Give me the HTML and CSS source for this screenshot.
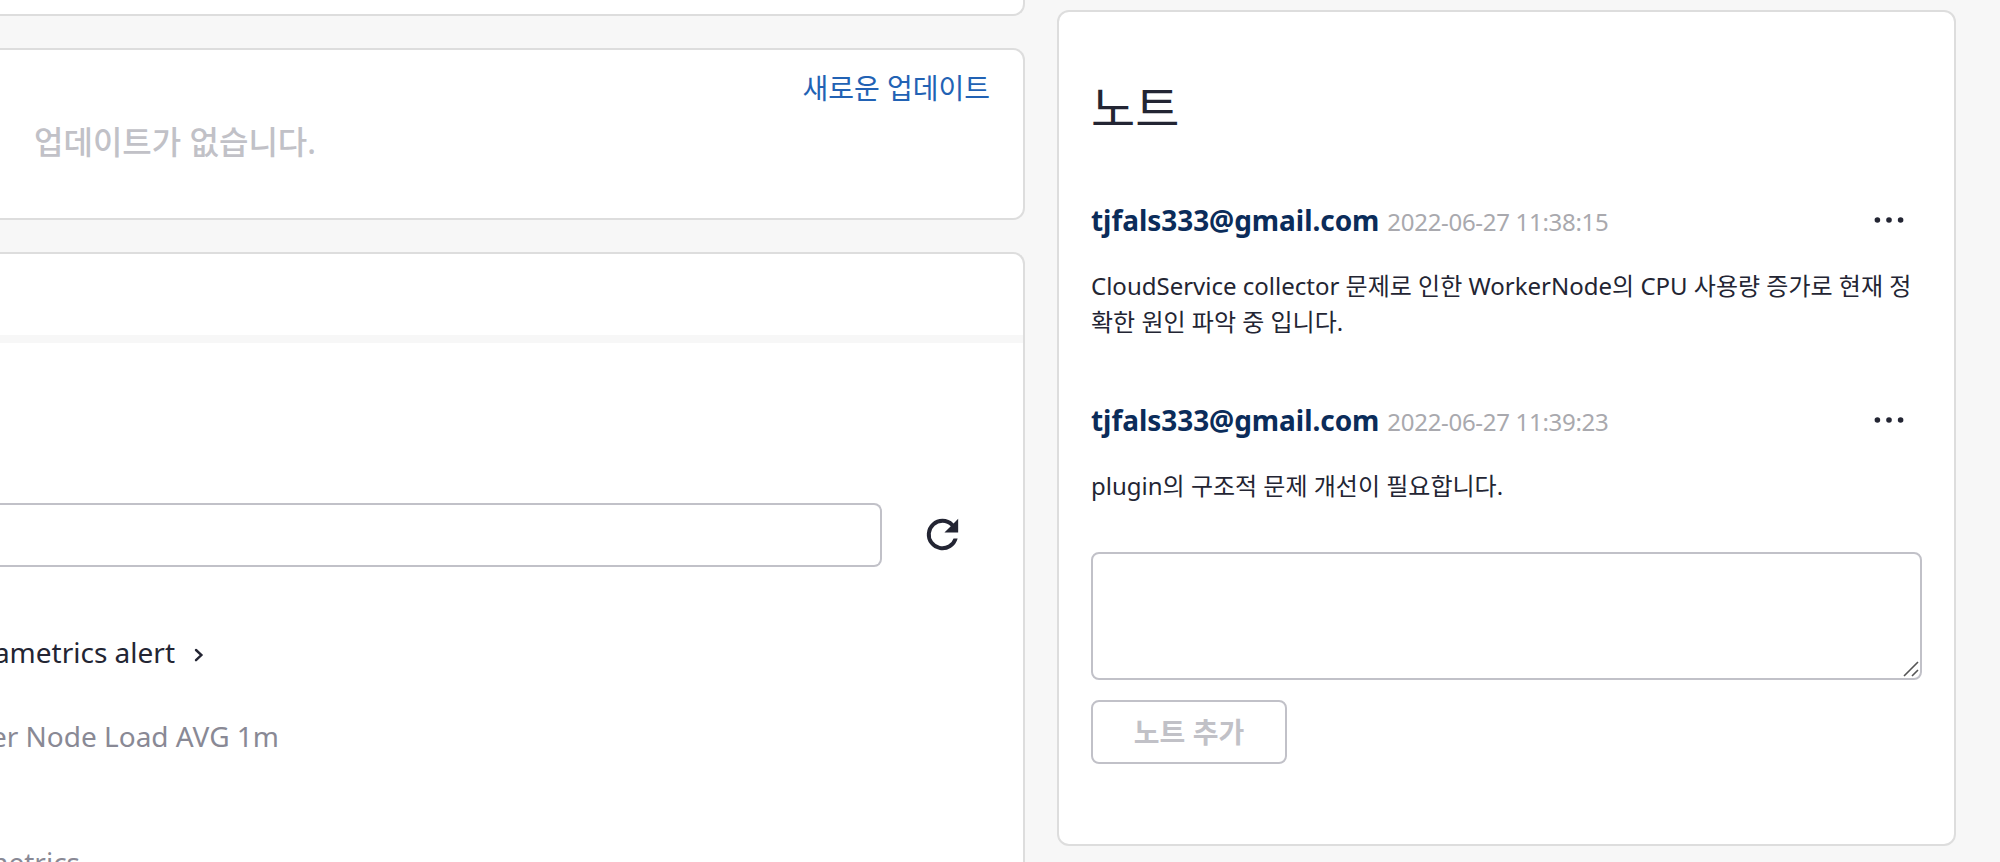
FILE: index.html
```html
<!DOCTYPE html>
<html lang="ko">
<head>
<meta charset="utf-8">
<title>노트</title>
<link rel="stylesheet" href="styles.css">
</head>
<body>
<div class="page">
  <main class="main">
    <section class="card card-stub"></section>
    <section class="card card-update">
      <a class="new-update">새로운 업데이트</a>
      <p class="empty">업데이트가 없습니다.</p>
    </section>
    <section class="card card-alerts">
      <div class="tabs"></div>
      <div class="toolbar">
        <div class="search"></div>
        <svg class="refresh" viewBox="0 0 24 24"><path d="M17.65 6.35A7.96 7.96 0 0 0 12 4a8 8 0 1 0 7.73 10h-2.08A6 6 0 1 1 12 6c1.66 0 3.14.69 4.22 1.78L13 11h7V4z"/></svg>
      </div>
      <div class="alert-title">
        <span class="clip clip-title">ametrics alert</span>
        <svg class="chevron" viewBox="0 0 12 16"><path d="M3 3l5.4 5L3 13.2"/></svg>
      </div>
      <div class="clip clip-node">er Node Load AVG 1m</div>
      <div class="clip clip-source">ametrics</div>
    </section>
  </main>
  <aside class="card notes">
    <h2 class="notes-title">노트</h2>
    <article class="note">
      <header class="note-head">
        <strong class="author">tjfals333@gmail.com</strong>
        <time class="date">2022-06-27 11:38:15</time>
        <svg class="more" viewBox="0 0 32 8"><circle cx="4.4" cy="4" r="2.8"/><circle cx="16" cy="4" r="2.8"/><circle cx="27.6" cy="4" r="2.8"/></svg>
      </header>
      <p class="note-body">CloudService collector 문제로 인한 WorkerNode의 CPU 사용량 증가로 현재 정확한 원인 파악 중 입니다.</p>
    </article>
    <article class="note">
      <header class="note-head">
        <strong class="author">tjfals333@gmail.com</strong>
        <time class="date">2022-06-27 11:39:23</time>
        <svg class="more" viewBox="0 0 32 8"><circle cx="4.4" cy="4" r="2.8"/><circle cx="16" cy="4" r="2.8"/><circle cx="27.6" cy="4" r="2.8"/></svg>
      </header>
      <p class="note-body">plugin의 구조적 문제 개선이 필요합니다.</p>
    </article>
    <div class="field">
      <textarea class="textarea"></textarea>
      <svg class="grip" viewBox="0 0 16 16"><path d="M1 15L15 1M9 15l6-6"/></svg>
    </div>
    <button class="add" disabled>노트 추가</button>
  </aside>
</div>
</body>
</html>
```

FILE: styles.css
```css
* { box-sizing: border-box; }
body {
  margin: 0;
  background: #f7f7f7;
  color: #232533;
  font-family: "Noto Sans", "Noto Sans CJK KR", sans-serif;
  font-size: 28px;
}
p, h2 { margin: 0; }
.page {
  display: flex;
  align-items: flex-start;
  gap: 32px;
  width: 2000px;
  height: 862px;
  overflow: hidden;
}
.main {
  display: flex;
  flex-direction: column;
  gap: 32px;
  width: 1025px;
  height: 862px;
  flex: none;
}
.card {
  background: #fff;
  border: 2px solid #ddd;
  border-radius: 12px;
  flex: none;
}
.main .card { border-left: 0; border-top-left-radius: 0; border-bottom-left-radius: 0; }
.main .card-stub { height: 16px; border-top: 0; border-top-right-radius: 0; }
.card-update { height: 172px; padding: 18px 33px 0 34px; }
.new-update {
  display: block;
  text-align: right;
  line-height: 40px;
  color: #2262b4;
}
.empty {
  margin-top: 10px;
  line-height: 48px;
  font-size: 32px;
  font-weight: 500;
  color: #c1c1c7;
}
.main .card-alerts { height: 640px; border-bottom: 0; border-bottom-right-radius: 0; }
.tabs { height: 89px; border-bottom: 8px solid #f7f7f7; }
.toolbar {
  display: flex;
  align-items: center;
  gap: 37px;
  margin-top: 160px;
}
.search {
  width: 882px;
  height: 64px;
  border: 2px solid #c1c1c8;
  border-left: 0;
  border-radius: 0 8px 8px 0;
}
.refresh { width: 47px; height: 47px; margin-bottom: 1px; fill: #232533; }
.alert-title { display: flex; align-items: center; gap: 18px; margin-top: 65px; }
.clip {
  display: flex;
  justify-content: flex-end;
  overflow: hidden;
  line-height: 40px;
  white-space: nowrap;
}
.clip-title { width: 175px; }
.clip-node { width: 279px; margin-top: 44px; color: #898995; }
.clip-source { width: 80px; margin-top: 86px; color: #898995; }
.chevron {
  width: 12px;
  height: 16px;
  margin-top: 6px;
  fill: none;
  stroke: #232533;
  stroke-width: 2.4;
  stroke-linecap: round;
}
.notes {
  width: 899px;
  height: 836px;
  margin-top: 10px;
  padding: 60px 32px 0;
}
.notes-title { font-size: 48px; font-weight: 400; line-height: 72px; }
.note { height: 200px; }
.notes-title + .note { margin-top: 56px; }
.note-head { display: flex; align-items: baseline; line-height: 40px; }
.author { color: #0b2c5a; font-weight: 700; letter-spacing: -0.05px; }
.date { margin-left: 8px; font-size: 24px; letter-spacing: -0.3px; color: #a9a9ae; }
.more { align-self: center; width: 32px; height: 8px; margin: 0 17px 2px auto; fill: #232533; }
.note-body { margin-top: 26px; font-size: 24px; line-height: 36px; }
.field { position: relative; height: 128px; margin-top: -48px; }
.textarea {
  display: block;
  width: 831px;
  height: 128px;
  padding: 8px 16px;
  border: 2px solid #c1c1c8;
  border-radius: 8px;
  resize: none;
  font: inherit;
}
.grip {
  position: absolute;
  right: 3px;
  bottom: 3px;
  width: 16px;
  height: 16px;
  fill: none;
  stroke: #555;
  stroke-width: 1.6;
}
.add {
  display: block;
  width: 196px;
  height: 64px;
  margin-top: 20px;
  padding: 0;
  border: 2px solid #c1c1c8;
  border-radius: 8px;
  background: #fff;
  color: #c1c1c7;
  font: inherit;
  font-weight: 700;
  line-height: 40px;
}
```
